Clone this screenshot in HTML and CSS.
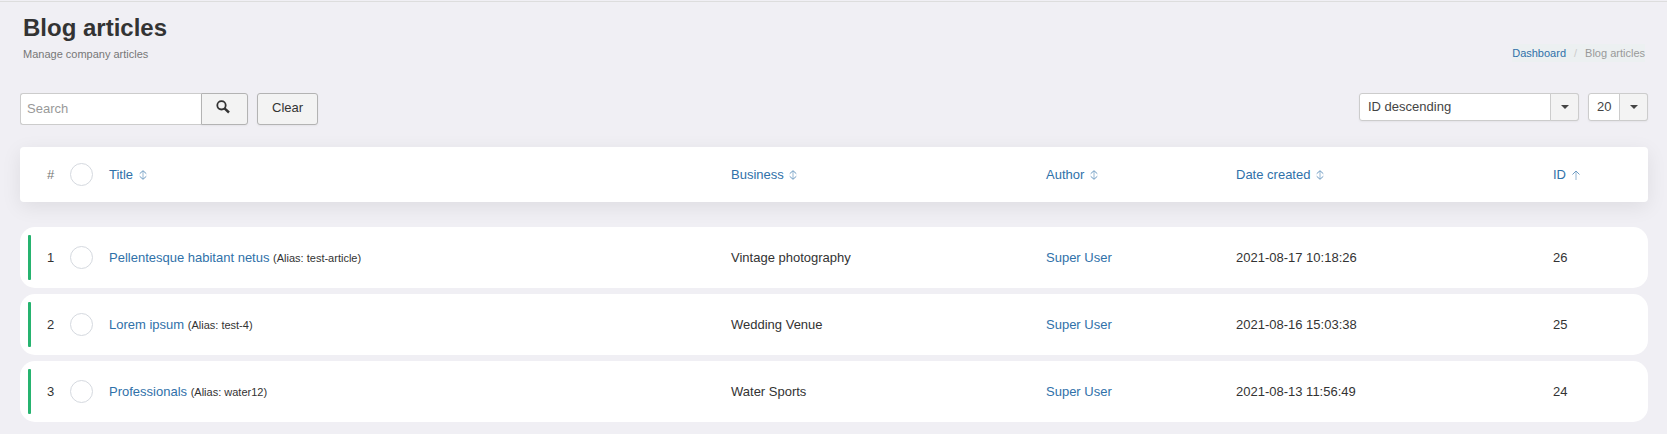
FILE: index.html
```html
<!DOCTYPE html>
<html lang="en">

<head>
  <meta charset="UTF-8"/>
  <meta name="viewport" content="width=device-width, initial-scale=1.0"/>
  <title>Blog articles</title>
  <link rel="stylesheet" href="styles.css">
</head>

<body>
<svg class="sprite" aria-hidden="true">
  <symbol id="sort" viewBox="0 0 8 10">
    <path d="M4 1v8" stroke="currentColor" opacity=".7"/>
    <path d="M.7 3.700L4 .7l3.300 3M.7 6.300L4 9.300l3.300-3" fill="none" stroke="currentColor"/>
  </symbol>
  <symbol id="sort-up" viewBox="0 0 8 10">
    <path d="M4 1v9" stroke="currentColor" opacity=".7"/>
    <path d="M.5 4.500L4 1l3.500 3.500" fill="none" stroke="currentColor"/>
  </symbol>
</svg>

<header class="page-header">
  <div>
    <h1>Blog articles</h1>
    <p>Manage company articles</p>
  </div>
  <nav class="breadcrumb" aria-label="Breadcrumb">
    <a href="#">Dashboard</a>
    <span class="divider">/</span>
    <span>Blog articles</span>
  </nav>
</header>

<main>
  <form class="toolbar">
    <div class="search">
      <input type="text" id="search" placeholder="Search" aria-label="Search"/>
      <button type="button" class="btn btn-search" aria-label="Search articles">
        <svg width="14" height="14" viewBox="0 0 14 14">
          <circle cx="5.500" cy="5.300" r="4.200" fill="none" stroke="currentColor" stroke-width="1.800"/>
          <path d="M8.500 8.300l4.500 4.200" stroke="currentColor" stroke-width="2.400"/>
        </svg>
      </button>
    </div>
    <button type="button" class="btn btn-clear">Clear</button>
    <div class="select select-order">
      <select aria-label="Sort table by">
        <option>ID descending</option>
        <option>ID ascending</option>
      </select>
      <span class="caret"></span>
    </div>
    <div class="select select-limit">
      <select aria-label="Articles per page">
        <option>20</option>
        <option>50</option>
      </select>
      <span class="caret"></span>
    </div>
  </form>

  <table class="articles">
    <thead>
      <tr>
        <th class="number">#</th>
        <th><input type="checkbox" aria-label="Check all"/></th>
        <th><a href="#">Title <svg class="sort"><use href="#sort"/></svg></a></th>
        <th><a href="#">Business <svg class="sort"><use href="#sort"/></svg></a></th>
        <th><a href="#">Author <svg class="sort"><use href="#sort"/></svg></a></th>
        <th><a href="#">Date created <svg class="sort"><use href="#sort"/></svg></a></th>
        <th><a href="#">ID <svg class="sort"><use href="#sort-up"/></svg></a></th>
      </tr>
    </thead>
    <tbody>
      <tr>
        <td class="number">1</td>
        <td><input type="checkbox" aria-label="Select Pellentesque habitant netus"/></td>
        <td><a href="#">Pellentesque habitant netus</a> <small>(Alias: test-article)</small></td>
        <td>Vintage photography</td>
        <td><a href="#">Super User</a></td>
        <td>2021-08-17 10:18:26</td>
        <td>26</td>
      </tr>
      <tr>
        <td class="number">2</td>
        <td><input type="checkbox" aria-label="Select Lorem ipsum"/></td>
        <td><a href="#">Lorem ipsum</a> <small>(Alias: test-4)</small></td>
        <td>Wedding Venue</td>
        <td><a href="#">Super User</a></td>
        <td>2021-08-16 15:03:38</td>
        <td>25</td>
      </tr>
      <tr>
        <td class="number">3</td>
        <td><input type="checkbox" aria-label="Select Professionals"/></td>
        <td><a href="#">Professionals</a> <small>(Alias: water12)</small></td>
        <td>Water Sports</td>
        <td><a href="#">Super User</a></td>
        <td>2021-08-13 11:56:49</td>
        <td>24</td>
      </tr>
    </tbody>
  </table>
</main>
</body>

</html>
```

FILE: styles.css
```css
* {
  box-sizing: border-box;
}

body {
  margin: 0;
  padding: 1px 19px 8px 20px;
  background: #f0eff4;
  color: #333;
  font-family: Arial, "Liberation Sans", sans-serif;
  font-size: 13px;
  line-height: 18px;
}

a {
  color: #3071a9;
  text-decoration: none;
}

a:hover {
  text-decoration: underline;
}

input,
select,
button {
  margin: 0;
  font: inherit;
}

.sprite {
  display: none;
}

.page-header {
  display: flex;
  justify-content: space-between;
  align-items: flex-end;
  margin: 0 -19px 0 -20px;
  padding: 11px 22px 30px 23px;
  border-top: 1px solid #ddd;
}

h1 {
  margin: 0 0 2px;
  font-size: 24px;
  line-height: 30px;
}

.page-header p {
  margin: 0;
  color: #777;
  font-size: 11px;
}

.breadcrumb {
  display: flex;
  gap: 8px;
  margin-bottom: 1px;
  background: #ecf0f1;
  color: #999;
  font-size: 11px;
}

.breadcrumb .divider {
  color: #ccc;
}

.toolbar {
  display: flex;
  align-items: flex-start;
  gap: 9px;
}

.search {
  display: flex;
}

.search input {
  width: 181px;
  height: 32px;
  padding: 0 6px 2px;
  border: 1px solid #ccc;
  border-right: none;
  border-radius: 3px 0 0 3px;
  background: #fff;
  color: #333;
}

.search input::placeholder {
  color: #999;
}

.btn {
  height: 32px;
  border: 1px solid #b3b3b3;
  border-radius: 3px;
  background: #f3f3f3;
  color: #333;
  box-shadow: 0 1px 2px rgba(0, 0, 0, 0.05);
  cursor: pointer;
}

.btn-search {
  width: 47px;
  padding: 0 4px 4px 0;
  border-radius: 0 3px 3px 0;
}

.btn-search svg {
  display: block;
  margin: 0 auto;
}

.btn-clear {
  padding: 0 14px 2px;
}

/* the caret box shares one grid cell with the select */
.select {
  display: grid;
  grid-template-columns: minmax(0, 1fr);
  height: 28px;
}

.select > * {
  grid-area: 1 / 1;
}

.select select {
  appearance: none;
  min-width: 0;
  padding: 0 30px 0 8px;
  border: 1px solid #ccc;
  border-radius: 3px;
  background: #fff;
  color: #444;
  box-shadow: 0 1px 2px rgba(0, 0, 0, 0.05);
}

.select-order {
  width: 220px;
  margin-left: auto;
}

.select-limit {
  width: 60px;
}

.caret {
  display: flex;
  justify-content: center;
  align-items: center;
  justify-self: end;
  width: 29px;
  border: 1px solid #ccc;
  border-radius: 0 3px 3px 0;
  background: #f3f3f3;
  pointer-events: none;
}

.caret::before {
  content: "";
  border: 4px solid transparent;
  border-top-color: #444;
  border-bottom: none;
}

.articles,
.articles thead,
.articles tbody {
  display: block;
}

.articles {
  margin-top: 22px;
}

.articles tr {
  display: grid;
  grid-template-columns: 42px 39px 622fr 315fr 190fr 317fr 87fr;
  align-items: center;
  padding: 8px;
  background: #fff;
}

.articles th,
.articles td {
  padding: 0;
  font-weight: normal;
  text-align: left;
}

.articles thead tr {
  height: 55px;
  border-radius: 4px;
  box-shadow: 0 5px 20px rgba(0, 0, 0, 0.08);
}

.articles tbody {
  display: grid;
  gap: 6px;
  margin-top: 25px;
}

.articles tbody tr {
  position: relative;
  height: 61px;
  border-radius: 15px;
}

.articles .number {
  padding-left: 3px;
  text-align: center;
}

.articles th.number {
  color: #777;
}

/* published marker */
.articles tbody tr::before {
  content: "";
  position: absolute;
  top: 8px;
  bottom: 8px;
  left: 8px;
  width: 3px;
  border-radius: 1px;
  background: #26b36f;
}

.articles input {
  display: block;
  appearance: none;
  width: 23px;
  height: 23px;
  border: 1px solid #d5d9df;
  border-radius: 50%;
  background: #fff;
}

.articles input:checked {
  background: #26b36f;
}

.articles small {
  font-size: 11px;
}

.sort {
  width: 8px;
  height: 10px;
  margin-left: 2px;
  vertical-align: -1px;
  opacity: 0.7;
}
```
